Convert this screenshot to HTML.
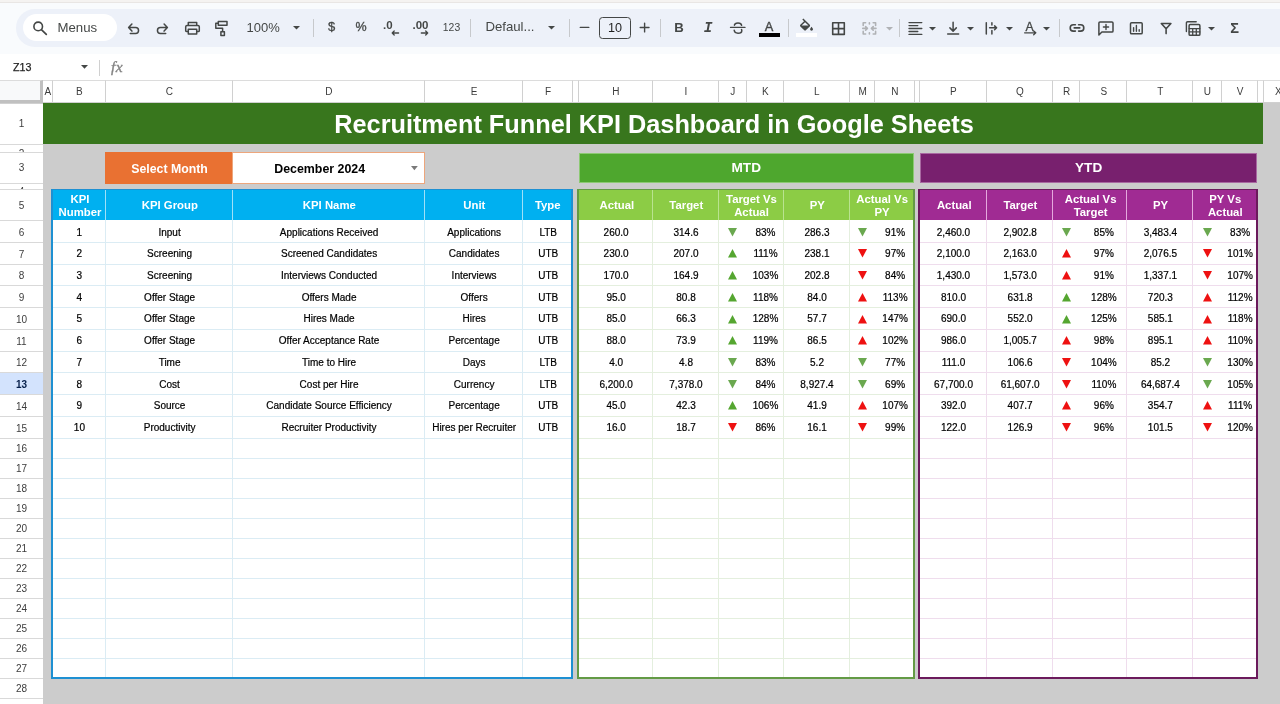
<!DOCTYPE html>
<html lang="en">
<head>
<meta charset="utf-8">
<title>Recruitment Funnel KPI Dashboard in Google Sheets</title>
<style>
html,body{margin:0;padding:0;}
body{will-change:transform;width:1280px;height:704px;overflow:hidden;position:relative;background:#fff;font-family:"Liberation Sans",Arial,sans-serif;color:#1f1f1f;}
div{position:absolute;box-sizing:border-box;}
svg{position:absolute;overflow:visible;}
.c{display:flex;align-items:center;justify-content:center;text-align:center;white-space:nowrap;}
.chrome{left:0;top:0;width:1280px;height:54px;background:#f9fbfd;}
.topline{left:0;top:0;width:1280px;height:3px;background:#f5f3f1;border-bottom:1px solid #e9e6e4;}
.toolbar{left:16px;top:9px;width:1290px;height:37.5px;border-radius:18.75px;background:#edf1f9;}
.search{left:23px;top:13.5px;width:94px;height:27.5px;border-radius:14px;background:#fff;}
.tb{font-size:14px;color:#444746;}
.fbar{left:0;top:54px;width:1280px;height:26.5px;background:#fff;}
.sheet{left:0;top:80.5px;width:1280px;height:624px;background:#ccc;}
.colhdr{background:#fff;font-size:10px;color:#3c3c3c;padding-left:1px;border-right:1px solid #d0d0d0;border-top:1px solid #dcdcdc;border-bottom:1px solid #d0d0d0;}
.rowhdr{background:#fff;left:0;width:43px;font-size:10px;color:#3c3c3c;padding-top:1.6px;border-bottom:1px solid #d9d9d9;}
.rowsel{background:#d3e3fd;color:#041e49;font-weight:bold;}
.corner{left:0;top:80px;width:43px;height:23px;background:#f8f9fa;border-right:3.5px solid #c0c0c0;border-bottom:3.2px solid #c0c0c0;border-top:1px solid #dcdcdc;}
.title{background:#38761d;color:#fff;font-weight:bold;font-size:25.3px;}
.orange{background:#e97132;color:#fff;font-weight:bold;font-size:12.3px;}
.dd{background:#fff;border:1px solid #eda67c;color:#000;font-weight:bold;font-size:12.4px;}
.mtd{background:#4ea72e;color:#fff;font-weight:bold;font-size:13.6px;border:1px solid #8cc973;}
.ytd{background:#78206e;color:#fff;font-weight:bold;font-size:13.6px;border:1px solid #a969a2;}
.hb{background:#00b0f0;color:#fff;font-weight:bold;font-size:11.35px;line-height:12.75px;white-space:normal;}
.hg{background:#8ccc45;color:#fff;font-weight:bold;font-size:11.35px;line-height:12.75px;white-space:normal;}
.hp{background:#a02b93;color:#fff;font-weight:bold;font-size:11.35px;line-height:12.75px;white-space:normal;}
.tblb{background:#fff;border:2px solid #1e90d2;}
.tblg{background:#fff;border:2px solid #639a45;}
.tblp{background:#fff;border:2px solid #6b1a5c;}
.d{font-size:10px;color:#000;-webkit-text-stroke:0.2px #000;}
.vl{width:1px;}
.hl{height:1px;}
</style>
</head>
<body>
<div class="chrome"></div>
<div class="topline"></div>
<div class="toolbar"></div>
<div class="search"></div>
<svg style="left:32px;top:20px" width="16" height="16" viewBox="32 20 16 16"><circle cx="38.2" cy="26.4" r="4.3" fill="none" stroke="#444746" stroke-width="1.6"/><path d="M41.4 29.7 L46.3 34.4" fill="none" stroke="#444746" stroke-width="1.7" stroke-linecap="round" stroke-linejoin="round" /></svg>
<div class="c tb" style="left:57.5px;top:18px;width:41px;height:18px;font-size:13.2px;justify-content:flex-start;">Menus</div>
<svg style="left:126px;top:22px" width="15" height="14" viewBox="126 22 15 14"><path d="M131.9 24.1 L128.6 27.6 L131.9 31.1 M129 27.6 H135.6 A2.95 2.95 0 0 1 135.6 33.5 H130.3" fill="none" stroke="#444746" stroke-width="1.5" stroke-linecap="round" stroke-linejoin="round" /></svg>
<svg style="left:155px;top:22px" width="15" height="14" viewBox="155 22 15 14"><path d="M164.1 24.1 L167.4 27.6 L164.1 31.1 M167 27.6 H160.4 A2.95 2.95 0 0 0 160.4 33.5 H165.7" fill="none" stroke="#444746" stroke-width="1.5" stroke-linecap="round" stroke-linejoin="round" /></svg>
<svg style="left:184px;top:21px" width="17" height="15" viewBox="184 21 17 15"><path d="M188.3 25.6 V22.6 H196.7 V25.6 M188.3 31.6 H186.6 A0.9 0.9 0 0 1 185.7 30.7 V26.8 A1.3 1.3 0 0 1 187 25.6 H198 A1.3 1.3 0 0 1 199.3 26.8 V30.7 A0.9 0.9 0 0 1 198.4 31.6 H196.7 M188.3 29.3 H196.7 V34 H188.3 Z" fill="none" stroke="#444746" stroke-width="1.5" stroke-linecap="round" stroke-linejoin="round" /></svg>
<svg style="left:214px;top:20px" width="15" height="17" viewBox="214 20 15 17"><path d="M218.3 21.6 H227 V25.2 H218.3 Z M218.3 23.3 H215.8 V28.2 H222.6 V31.6 M220.9 31.8 H224.4 V35.6 H220.9 Z" fill="none" stroke="#444746" stroke-width="1.5" stroke-linecap="round" stroke-linejoin="round" /></svg>
<div class="c tb" style="left:246.5px;top:18px;width:36px;height:18px;font-size:13px;justify-content:flex-start;">100%</div>
<svg style="left:293px;top:26.2px" width="7" height="3.6" viewBox="293 26.2 7 3.6"><path d="M293 26.2 h7 l-3.5 3.6 z" fill="#444746"/></svg>
<div style="left:313px;top:18.5px;width:1px;height:18.5px;background:#c7c9cc;"></div>
<div class="c tb" style="left:322px;top:17.5px;width:19px;height:18px;font-size:13px;-webkit-text-stroke:0.3px #444746;">$</div>
<div class="c tb" style="left:351px;top:17.5px;width:20px;height:18px;font-size:12.5px;-webkit-text-stroke:0.3px #444746;">%</div>
<div class="c tb" style="left:383px;top:15.5px;width:10px;height:18px;font-size:11.5px;justify-content:flex-start;font-weight:bold;">.0</div>
<svg style="left:390px;top:30px" width="10" height="6" viewBox="390 30 10 6"><path d="M398.6 33 H392.2 M394.2 31 L392.2 33 L394.2 35" fill="none" stroke="#444746" stroke-width="1.3" stroke-linecap="round" stroke-linejoin="round" /></svg>
<div class="c tb" style="left:412.5px;top:15.5px;width:18px;height:18px;font-size:11.5px;justify-content:flex-start;font-weight:bold;">.00</div>
<svg style="left:420px;top:30px" width="10" height="6" viewBox="420 30 10 6"><path d="M421.3 33 H427.7 M425.7 31 L427.7 33 L425.7 35" fill="none" stroke="#444746" stroke-width="1.3" stroke-linecap="round" stroke-linejoin="round" /></svg>
<div class="c tb" style="left:441px;top:18px;width:21px;height:18px;font-size:10.4px;">123</div>
<div style="left:470px;top:18.5px;width:1px;height:18.5px;background:#c7c9cc;"></div>
<div class="c tb" style="left:485.4px;top:17.5px;width:52px;height:18px;font-size:13.2px;justify-content:flex-start;">Defaul...</div>
<svg style="left:548px;top:26.2px" width="7" height="3.6" viewBox="548 26.2 7 3.6"><path d="M548 26.2 h7 l-3.5 3.6 z" fill="#444746"/></svg>
<div style="left:569px;top:18.5px;width:1px;height:18.5px;background:#c7c9cc;"></div>
<svg style="left:578px;top:24px" width="13" height="7" viewBox="578 24 13 7"><path d="M580.3 27.4 H588.8" fill="none" stroke="#444746" stroke-width="1.4" stroke-linecap="round" stroke-linejoin="round" /></svg>
<div class="c tb" style="left:599px;top:16.5px;width:32px;height:22.3px;border:1px solid #444746;border-radius:3.5px;font-size:12.6px;color:#1f1f1f;">10</div>
<svg style="left:638px;top:21px" width="13" height="13" viewBox="638 21 13 13"><path d="M640.2 27.5 H649 M644.6 23.1 V31.9" fill="none" stroke="#444746" stroke-width="1.4" stroke-linecap="round" stroke-linejoin="round" /></svg>
<div style="left:659.8px;top:18.5px;width:1px;height:18.5px;background:#c7c9cc;"></div>
<div class="c tb" style="left:670px;top:18px;width:18px;height:19px;font-size:13.2px;font-weight:bold;">B</div>
<div class="c tb" style="left:699px;top:18px;width:18px;height:19px;font-size:14.5px;font-family:'Liberation Mono',monospace;font-weight:bold;font-style:italic;">I</div>
<svg style="left:728px;top:20px" width="19" height="16" viewBox="728 20 19 16"><path d="M730.5 27.4 H745" fill="none" stroke="#444746" stroke-width="1.3" stroke-linecap="round" stroke-linejoin="round" /><path d="M741.6 25.3 C741.4 23.7 740.1 22.9 738 22.9 C735.9 22.9 734.6 23.7 734.4 25.2 M734.2 30.3 C734.4 32.3 735.7 33.2 738 33.2 C740.3 33.2 741.8 32.3 741.8 30.7 C741.8 30.2 741.7 29.8 741.5 29.5" fill="none" stroke="#444746" stroke-width="1.5" stroke-linecap="round" stroke-linejoin="round" /></svg>
<div class="c tb" style="left:759px;top:18.2px;width:20px;height:17px;font-size:12.8px;-webkit-text-stroke:0.35px #444746;">A</div>
<div style="left:758.5px;top:33.3px;width:21px;height:3.4px;background:#000;"></div>
<div style="left:788px;top:18.5px;width:1px;height:18.5px;background:#c7c9cc;"></div>
<svg style="left:795px;top:17px" width="24" height="16" viewBox="795 17 24 16"><g transform="translate(797.83 18.4) scale(0.722)"><path fill="#444746" d="M16.56 8.94L7.62 0 6.21 1.41l2.38 2.38-5.15 5.15c-.59.59-.59 1.54 0 2.12l5.5 5.5c.29.29.68.44 1.06.44s.77-.15 1.06-.44l5.5-5.5c.59-.58.59-1.53 0-2.12zM5.21 10L10 5.21 14.79 10H5.21zM19 11.5s-2 2.17-2 3.5c0 1.1.9 2 2 2s2-.9 2-2c0-1.33-2-3.5-2-3.5z"/></g></svg>
<div style="left:796.3px;top:33.3px;width:20.7px;height:3.4px;background:#fff;"></div>
<svg style="left:830px;top:20px" width="17" height="17" viewBox="830 20 17 17"><path d="M832.7 22.8 H844.3 V34.4 H832.7 Z M838.5 22.8 V34.4 M832.7 28.6 H844.3" fill="none" stroke="#444746" stroke-width="1.6" stroke-linecap="round" stroke-linejoin="round" /></svg>
<svg style="left:861px;top:20px" width="17" height="16" viewBox="861 20 17 16"><path d="M865.6 22.8 H863.2 V25.4 M863.2 31.4 V34 H865.6 M873.2 22.8 H875.6 V25.4 M875.6 31.4 V34 H873.2 M869.4 22.8 V24 M869.4 32.8 V34" fill="none" stroke="#b0b2b5" stroke-width="1.6" stroke-linecap="round" stroke-linejoin="round" /><path d="M862.8 28.4 H867.2 M865.6 26.6 L867.4 28.4 L865.6 30.2 M876 28.4 H871.6 M873.2 26.6 L871.4 28.4 L873.2 30.2" fill="none" stroke="#b0b2b5" stroke-width="1.6" stroke-linecap="round" stroke-linejoin="round" /></svg>
<svg style="left:885.5px;top:26.5px" width="7" height="3.6" viewBox="885.5 26.5 7 3.6"><path d="M885.5 26.5 h7 l-3.5 3.6 z" fill="#b0b2b5"/></svg>
<div style="left:899px;top:18.5px;width:1px;height:18.5px;background:#c7c9cc;"></div>
<svg style="left:907px;top:20px" width="17" height="16" viewBox="907 20 17 16"><path d="M909 22.6 H921.8 M909 25.55 H917.8 M909 28.5 H921.8 M909 31.45 H917.8 M909 34.4 H921.8" fill="none" stroke="#444746" stroke-width="1.35" stroke-linecap="round" stroke-linejoin="round" stroke-linecap="butt"/></svg>
<svg style="left:929px;top:26.5px" width="7" height="3.6" viewBox="929 26.5 7 3.6"><path d="M929 26.5 h7 l-3.5 3.6 z" fill="#444746"/></svg>
<svg style="left:946px;top:20px" width="14" height="16" viewBox="946 20 14 16"><path d="M953.1 22.3 V31 M949.9 27.9 L953.1 31.1 L956.3 27.9" fill="none" stroke="#444746" stroke-width="1.5" stroke-linecap="round" stroke-linejoin="round" /><path d="M947.7 34.1 H958.6" fill="none" stroke="#444746" stroke-width="1.5" stroke-linecap="round" stroke-linejoin="round" /></svg>
<svg style="left:967px;top:26.5px" width="7" height="3.6" viewBox="967 26.5 7 3.6"><path d="M967 26.5 h7 l-3.5 3.6 z" fill="#444746"/></svg>
<svg style="left:984px;top:20px" width="15" height="16" viewBox="984 20 15 16"><path d="M986.3 22.8 V34" fill="none" stroke="#444746" stroke-width="1.5" stroke-linecap="round" stroke-linejoin="round" /><path d="M991.9 22.8 V25 M991.9 30.6 V34" fill="none" stroke="#444746" stroke-width="1.5" stroke-linecap="round" stroke-linejoin="round" /><path d="M989.6 27.8 H996.4 M994.6 25.9 L996.6 27.8 L994.6 29.7" fill="none" stroke="#444746" stroke-width="1.5" stroke-linecap="round" stroke-linejoin="round" /></svg>
<svg style="left:1005.6px;top:26.5px" width="7" height="3.6" viewBox="1005.6 26.5 7 3.6"><path d="M1005.6 26.5 h7 l-3.5 3.6 z" fill="#444746"/></svg>
<div class="c tb" style="left:1020.2px;top:18.2px;width:19px;height:17px;font-size:12.2px;-webkit-text-stroke:0.3px #444746;">A</div>
<svg style="left:1023px;top:30px" width="15" height="6" viewBox="1023 30 15 6"><path d="M1024.6 32.8 H1035.6 M1033.7 30.9 L1035.8 32.8 L1033.7 34.7" fill="none" stroke="#444746" stroke-width="1.3" stroke-linecap="round" stroke-linejoin="round" /></svg>
<svg style="left:1043px;top:26.5px" width="7" height="3.6" viewBox="1043 26.5 7 3.6"><path d="M1043 26.5 h7 l-3.5 3.6 z" fill="#444746"/></svg>
<div style="left:1058.5px;top:18.5px;width:1px;height:18.5px;background:#c7c9cc;"></div>
<svg style="left:1068px;top:22px" width="18" height="12" viewBox="1068 22 18 12"><path d="M1075.4 24.7 H1073.4 A3.2 3.2 0 0 0 1073.4 31.1 H1075.4 M1078.6 24.7 H1080.6 A3.2 3.2 0 0 1 1080.6 31.1 H1078.6 M1074.2 27.9 H1079.8" fill="none" stroke="#444746" stroke-width="1.6" stroke-linecap="round" stroke-linejoin="round" /></svg>
<svg style="left:1097px;top:20px" width="18" height="17" viewBox="1097 20 18 17"><path d="M1098.9 35 V23.1 A1.1 1.1 0 0 1 1100 22 H1111.9 A1.1 1.1 0 0 1 1113 23.1 V30.9 A1.1 1.1 0 0 1 1111.9 32 H1101.9 Z" fill="none" stroke="#444746" stroke-width="1.5" stroke-linecap="round" stroke-linejoin="round" /><path d="M1106 24.4 V29.6 M1103.4 27 H1108.6" fill="none" stroke="#444746" stroke-width="1.4" stroke-linecap="round" stroke-linejoin="round" /></svg>
<svg style="left:1128px;top:20px" width="17" height="17" viewBox="1128 20 17 17"><path d="M1131.6 22.7 H1141.1 A1.1 1.1 0 0 1 1142.2 23.8 V32.7 A1.1 1.1 0 0 1 1141.1 33.8 H1131.6 A1.1 1.1 0 0 1 1130.5 32.7 V23.8 A1.1 1.1 0 0 1 1131.6 22.7 Z" fill="none" stroke="#444746" stroke-width="1.5" stroke-linecap="round" stroke-linejoin="round" /><path d="M1133.6 27.6 V31.3 M1136.4 25.4 V31.3 M1139.2 29.6 V31.3" fill="none" stroke="#444746" stroke-width="1.4" stroke-linecap="round" stroke-linejoin="round" /></svg>
<svg style="left:1159px;top:21px" width="14" height="15" viewBox="1159 21 14 15"><path d="M1161.3 23.5 H1170.9 L1166.1 28.7 Z M1166.1 28.7 V33.6" fill="none" stroke="#444746" stroke-width="1.6" stroke-linecap="round" stroke-linejoin="round" /></svg>
<svg style="left:1184px;top:19px" width="18" height="18" viewBox="1184 19 18 18"><path d="M1186.4 31.6 V22.9 A1.2 1.2 0 0 1 1187.6 21.7 H1196.2" fill="none" stroke="#444746" stroke-width="1.4" stroke-linecap="round" stroke-linejoin="round" /><path d="M1190.2 24.6 H1198.8 A1.1 1.1 0 0 1 1199.9 25.7 V34.2 A1.1 1.1 0 0 1 1198.8 35.3 H1190.2 A1.1 1.1 0 0 1 1189.1 34.2 V25.7 A1.1 1.1 0 0 1 1190.2 24.6 Z" fill="none" stroke="#444746" stroke-width="1.5" stroke-linecap="round" stroke-linejoin="round" /><path d="M1189.2 28.6 H1199.8 M1189.2 31.9 H1199.8 M1192.7 28.6 V35.2 M1196.3 28.6 V35.2" fill="none" stroke="#444746" stroke-width="1.3" stroke-linecap="round" stroke-linejoin="round" /></svg>
<svg style="left:1207.5px;top:26.5px" width="7" height="3.6" viewBox="1207.5 26.5 7 3.6"><path d="M1207.5 26.5 h7 l-3.5 3.6 z" fill="#444746"/></svg>
<div class="c tb" style="left:1225px;top:18px;width:19px;height:20px;font-size:14.5px;font-weight:bold;">Σ</div>
<div class="fbar"></div>
<div class="c" style="left:13px;top:59px;width:20px;height:16px;font-size:10.7px;color:#1f1f1f;-webkit-text-stroke:0.25px #1f1f1f;justify-content:flex-start;">Z13</div>
<svg style="left:81px;top:65.2px" width="7" height="3.7" viewBox="0 0 7 3.7"><path d="M0 0h7L3.5 3.7z" fill="#444746"/></svg>
<div style="left:99px;top:60px;width:1px;height:16px;background:#d0d0d0;"></div>
<div class="c" style="left:109px;top:58px;width:16px;height:18px;font-family:'Liberation Serif',serif;font-style:italic;font-size:15.5px;color:#858585;-webkit-text-stroke:0.35px #858585;letter-spacing:0.3px;">fx</div>
<div class="sheet"></div>
<div class="colhdr c" style="left:43px;top:80px;width:9.6px;height:22.5px;">A</div>
<div class="colhdr c" style="left:52.6px;top:80px;width:53.3px;height:22.5px;">B</div>
<div class="colhdr c" style="left:105.9px;top:80px;width:127.1px;height:22.5px;">C</div>
<div class="colhdr c" style="left:233px;top:80px;width:191.85px;height:22.5px;">D</div>
<div class="colhdr c" style="left:424.85px;top:80px;width:98.25px;height:22.5px;">E</div>
<div class="colhdr c" style="left:523.1px;top:80px;width:50px;height:22.5px;">F</div>
<div class="colhdr c" style="left:573.1px;top:80px;width:5.75px;height:22.5px;"></div>
<div class="colhdr c" style="left:578.85px;top:80px;width:74.25px;height:22.5px;">H</div>
<div class="colhdr c" style="left:653.1px;top:80px;width:65.5px;height:22.5px;">I</div>
<div class="colhdr c" style="left:718.6px;top:80px;width:28.5px;height:22.5px;">J</div>
<div class="colhdr c" style="left:747.1px;top:80px;width:36.5px;height:22.5px;">K</div>
<div class="colhdr c" style="left:783.6px;top:80px;width:66.5px;height:22.5px;">L</div>
<div class="colhdr c" style="left:850.1px;top:80px;width:25px;height:22.5px;">M</div>
<div class="colhdr c" style="left:875.1px;top:80px;width:39.75px;height:22.5px;">N</div>
<div class="colhdr c" style="left:914.85px;top:80px;width:5px;height:22.5px;"></div>
<div class="colhdr c" style="left:919.85px;top:80px;width:67px;height:22.5px;">P</div>
<div class="colhdr c" style="left:986.85px;top:80px;width:66.25px;height:22.5px;">Q</div>
<div class="colhdr c" style="left:1053.1px;top:80px;width:27px;height:22.5px;">R</div>
<div class="colhdr c" style="left:1080.1px;top:80px;width:47.25px;height:22.5px;">S</div>
<div class="colhdr c" style="left:1127.35px;top:80px;width:65.75px;height:22.5px;">T</div>
<div class="colhdr c" style="left:1193.1px;top:80px;width:28.75px;height:22.5px;">U</div>
<div class="colhdr c" style="left:1221.85px;top:80px;width:36.25px;height:22.5px;">V</div>
<div class="colhdr c" style="left:1258.1px;top:80px;width:6px;height:22.5px;"></div>
<div class="colhdr c" style="left:1264.1px;top:80px;width:28.5px;height:22.5px;">X</div>
<div class="corner"></div>
<div class="rowhdr c" style="left:0px;top:103.5px;width:43px;height:41px;padding-top:0;">1</div>
<div class="rowhdr c" style="left:0px;top:144.5px;width:43px;height:8.25px;overflow:hidden;align-items:flex-start;line-height:10px;padding-top:4px;">2</div>
<div class="rowhdr c" style="left:0px;top:152.75px;width:43px;height:31.25px;padding-top:0;">3</div>
<div class="rowhdr c" style="left:0px;top:184px;width:43px;height:6px;overflow:hidden;align-items:flex-start;line-height:10px;padding-top:3px;">4</div>
<div class="rowhdr c" style="left:0px;top:190px;width:43px;height:31.25px;padding-top:0;">5</div>
<div class="rowhdr c" style="left:0px;top:221.25px;width:43px;height:21.72px;">6</div>
<div class="rowhdr c" style="left:0px;top:242.97px;width:43px;height:21.72px;">7</div>
<div class="rowhdr c" style="left:0px;top:264.69px;width:43px;height:21.72px;">8</div>
<div class="rowhdr c" style="left:0px;top:286.41px;width:43px;height:21.72px;">9</div>
<div class="rowhdr c" style="left:0px;top:308.13px;width:43px;height:21.72px;">10</div>
<div class="rowhdr c" style="left:0px;top:329.85px;width:43px;height:21.72px;">11</div>
<div class="rowhdr c" style="left:0px;top:351.57px;width:43px;height:21.72px;">12</div>
<div class="rowhdr c rowsel" style="left:0px;top:373.29px;width:43px;height:21.72px;">13</div>
<div class="rowhdr c" style="left:0px;top:395.01px;width:43px;height:21.72px;">14</div>
<div class="rowhdr c" style="left:0px;top:416.73px;width:43px;height:22.27px;">15</div>
<div class="rowhdr c" style="left:0px;top:439px;width:43px;height:20px;padding-top:0;padding-bottom:0.6px;">16</div>
<div class="rowhdr c" style="left:0px;top:459px;width:43px;height:20px;padding-top:0;padding-bottom:0.6px;">17</div>
<div class="rowhdr c" style="left:0px;top:479px;width:43px;height:20px;padding-top:0;padding-bottom:0.6px;">18</div>
<div class="rowhdr c" style="left:0px;top:499px;width:43px;height:20px;padding-top:0;padding-bottom:0.6px;">19</div>
<div class="rowhdr c" style="left:0px;top:519px;width:43px;height:20px;padding-top:0;padding-bottom:0.6px;">20</div>
<div class="rowhdr c" style="left:0px;top:539px;width:43px;height:20px;padding-top:0;padding-bottom:0.6px;">21</div>
<div class="rowhdr c" style="left:0px;top:559px;width:43px;height:20px;padding-top:0;padding-bottom:0.6px;">22</div>
<div class="rowhdr c" style="left:0px;top:579px;width:43px;height:20px;padding-top:0;padding-bottom:0.6px;">23</div>
<div class="rowhdr c" style="left:0px;top:599px;width:43px;height:20px;padding-top:0;padding-bottom:0.6px;">24</div>
<div class="rowhdr c" style="left:0px;top:619px;width:43px;height:20px;padding-top:0;padding-bottom:0.6px;">25</div>
<div class="rowhdr c" style="left:0px;top:639px;width:43px;height:20px;padding-top:0;padding-bottom:0.6px;">26</div>
<div class="rowhdr c" style="left:0px;top:659px;width:43px;height:20px;padding-top:0;padding-bottom:0.6px;">27</div>
<div class="rowhdr c" style="left:0px;top:679px;width:43px;height:20px;padding-top:0;padding-bottom:0.6px;">28</div>
<div class="rowhdr c" style="left:0px;top:699px;width:43px;height:20px;padding-top:0;padding-bottom:0.6px;">29</div>
<div style="left:0;top:102.5px;width:43px;height:1px;background:#d0d0d0;"></div>
<div class="title c" style="left:43px;top:103px;width:1220px;height:41px;padding-top:2.5px;padding-left:2px;">Recruitment Funnel KPI Dashboard in Google Sheets</div>
<div class="orange c" style="left:105.3px;top:152.25px;width:127.1px;height:31.25px;padding-top:2.5px;padding-left:1.5px;">Select Month</div>
<div class="dd c" style="left:232.4px;top:152.25px;width:192.6px;height:31.25px;padding-right:18px;padding-top:2.5px;">December 2024</div>
<svg style="left:411px;top:165.8px" width="6.8" height="4.2" viewBox="0 0 6.8 4.2"><path d="M0 0h6.8L3.4 4.2z" fill="#7a7a7a"/></svg>
<div class="mtd c" style="left:579px;top:153px;width:334.5px;height:29.75px;">MTD</div>
<div class="ytd c" style="left:920px;top:153px;width:337.25px;height:29.75px;">YTD</div>
<div class="tblb" style="left:50.75px;top:189px;width:522.25px;height:490px;"></div>
<div class="hb c" style="left:52.75px;top:190px;width:52.55px;height:30.4px;padding-top:1px;padding-left:2px;">KPI<br>Number</div>
<div class="hb c" style="left:105.3px;top:190px;width:127.1px;height:30.4px;padding-top:1px;padding-left:2px;">KPI Group</div>
<div class="hb c" style="left:232.4px;top:190px;width:191.85px;height:30.4px;padding-top:1px;padding-left:2px;">KPI Name</div>
<div class="hb c" style="left:424.25px;top:190px;width:98.25px;height:30.4px;padding-top:1px;padding-left:2px;">Unit</div>
<div class="hb c" style="left:522.5px;top:190px;width:48.5px;height:30.4px;padding-top:1px;padding-left:2px;">Type</div>
<div class="vl" style="left:104.8px;top:190px;height:30.4px;background:#9fe0f8;"></div>
<div class="vl" style="left:231.9px;top:190px;height:30.4px;background:#9fe0f8;"></div>
<div class="vl" style="left:423.75px;top:190px;height:30.4px;background:#9fe0f8;"></div>
<div class="vl" style="left:522px;top:190px;height:30.4px;background:#9fe0f8;"></div>
<div class="vl" style="left:104.8px;top:220.4px;height:456.6px;background:#dbecf4;"></div>
<div class="vl" style="left:231.9px;top:220.4px;height:456.6px;background:#dbecf4;"></div>
<div class="vl" style="left:423.75px;top:220.4px;height:456.6px;background:#dbecf4;"></div>
<div class="vl" style="left:522px;top:220.4px;height:456.6px;background:#dbecf4;"></div>
<div class="hl" style="left:52.75px;top:241.97px;width:518.25px;background:#dbecf4;"></div>
<div class="hl" style="left:52.75px;top:263.69px;width:518.25px;background:#dbecf4;"></div>
<div class="hl" style="left:52.75px;top:285.41px;width:518.25px;background:#dbecf4;"></div>
<div class="hl" style="left:52.75px;top:307.13px;width:518.25px;background:#dbecf4;"></div>
<div class="hl" style="left:52.75px;top:328.85px;width:518.25px;background:#dbecf4;"></div>
<div class="hl" style="left:52.75px;top:350.57px;width:518.25px;background:#dbecf4;"></div>
<div class="hl" style="left:52.75px;top:372.29px;width:518.25px;background:#dbecf4;"></div>
<div class="hl" style="left:52.75px;top:394.01px;width:518.25px;background:#dbecf4;"></div>
<div class="hl" style="left:52.75px;top:415.73px;width:518.25px;background:#dbecf4;"></div>
<div class="hl" style="left:52.75px;top:438px;width:518.25px;background:#dbecf4;"></div>
<div class="hl" style="left:52.75px;top:458px;width:518.25px;background:#dbecf4;"></div>
<div class="hl" style="left:52.75px;top:478px;width:518.25px;background:#dbecf4;"></div>
<div class="hl" style="left:52.75px;top:498px;width:518.25px;background:#dbecf4;"></div>
<div class="hl" style="left:52.75px;top:518px;width:518.25px;background:#dbecf4;"></div>
<div class="hl" style="left:52.75px;top:538px;width:518.25px;background:#dbecf4;"></div>
<div class="hl" style="left:52.75px;top:558px;width:518.25px;background:#dbecf4;"></div>
<div class="hl" style="left:52.75px;top:578px;width:518.25px;background:#dbecf4;"></div>
<div class="hl" style="left:52.75px;top:598px;width:518.25px;background:#dbecf4;"></div>
<div class="hl" style="left:52.75px;top:618px;width:518.25px;background:#dbecf4;"></div>
<div class="hl" style="left:52.75px;top:638px;width:518.25px;background:#dbecf4;"></div>
<div class="hl" style="left:52.75px;top:658px;width:518.25px;background:#dbecf4;"></div>
<div class="tblg" style="left:577.25px;top:189px;width:337.5px;height:490px;"></div>
<div class="hg c" style="left:579.25px;top:190px;width:73.25px;height:30.4px;padding-top:1px;padding-left:2px;">Actual</div>
<div class="hg c" style="left:652.5px;top:190px;width:65.5px;height:30.4px;padding-top:1px;padding-left:2px;">Target</div>
<div class="hg c" style="left:718px;top:190px;width:65px;height:30.4px;padding-top:1px;padding-left:2px;">Target Vs<br>Actual</div>
<div class="hg c" style="left:783px;top:190px;width:66.5px;height:30.4px;padding-top:1px;padding-left:2px;">PY</div>
<div class="hg c" style="left:849.5px;top:190px;width:63.25px;height:30.4px;padding-top:1px;padding-left:2px;">Actual Vs<br>PY</div>
<div class="vl" style="left:652px;top:190px;height:30.4px;background:#b9e38f;"></div>
<div class="vl" style="left:717.5px;top:190px;height:30.4px;background:#b9e38f;"></div>
<div class="vl" style="left:782.5px;top:190px;height:30.4px;background:#b9e38f;"></div>
<div class="vl" style="left:849px;top:190px;height:30.4px;background:#b9e38f;"></div>
<div class="vl" style="left:652px;top:220.4px;height:456.6px;background:#e4efde;"></div>
<div class="vl" style="left:717.5px;top:220.4px;height:456.6px;background:#e4efde;"></div>
<div class="vl" style="left:782.5px;top:220.4px;height:456.6px;background:#e4efde;"></div>
<div class="vl" style="left:849px;top:220.4px;height:456.6px;background:#e4efde;"></div>
<div class="hl" style="left:579.25px;top:241.97px;width:333.5px;background:#e4efde;"></div>
<div class="hl" style="left:579.25px;top:263.69px;width:333.5px;background:#e4efde;"></div>
<div class="hl" style="left:579.25px;top:285.41px;width:333.5px;background:#e4efde;"></div>
<div class="hl" style="left:579.25px;top:307.13px;width:333.5px;background:#e4efde;"></div>
<div class="hl" style="left:579.25px;top:328.85px;width:333.5px;background:#e4efde;"></div>
<div class="hl" style="left:579.25px;top:350.57px;width:333.5px;background:#e4efde;"></div>
<div class="hl" style="left:579.25px;top:372.29px;width:333.5px;background:#e4efde;"></div>
<div class="hl" style="left:579.25px;top:394.01px;width:333.5px;background:#e4efde;"></div>
<div class="hl" style="left:579.25px;top:415.73px;width:333.5px;background:#e4efde;"></div>
<div class="hl" style="left:579.25px;top:438px;width:333.5px;background:#e4efde;"></div>
<div class="hl" style="left:579.25px;top:458px;width:333.5px;background:#e4efde;"></div>
<div class="hl" style="left:579.25px;top:478px;width:333.5px;background:#e4efde;"></div>
<div class="hl" style="left:579.25px;top:498px;width:333.5px;background:#e4efde;"></div>
<div class="hl" style="left:579.25px;top:518px;width:333.5px;background:#e4efde;"></div>
<div class="hl" style="left:579.25px;top:538px;width:333.5px;background:#e4efde;"></div>
<div class="hl" style="left:579.25px;top:558px;width:333.5px;background:#e4efde;"></div>
<div class="hl" style="left:579.25px;top:578px;width:333.5px;background:#e4efde;"></div>
<div class="hl" style="left:579.25px;top:598px;width:333.5px;background:#e4efde;"></div>
<div class="hl" style="left:579.25px;top:618px;width:333.5px;background:#e4efde;"></div>
<div class="hl" style="left:579.25px;top:638px;width:333.5px;background:#e4efde;"></div>
<div class="hl" style="left:579.25px;top:658px;width:333.5px;background:#e4efde;"></div>
<div class="tblp" style="left:918.25px;top:189px;width:339.75px;height:490px;"></div>
<div class="hp c" style="left:920.25px;top:190px;width:66px;height:30.4px;padding-top:1px;padding-left:2px;">Actual</div>
<div class="hp c" style="left:986.25px;top:190px;width:66.25px;height:30.4px;padding-top:1px;padding-left:2px;">Target</div>
<div class="hp c" style="left:1052.5px;top:190px;width:74.25px;height:30.4px;padding-top:1px;padding-left:2px;">Actual Vs<br>Target</div>
<div class="hp c" style="left:1126.75px;top:190px;width:65.75px;height:30.4px;padding-top:1px;padding-left:2px;">PY</div>
<div class="hp c" style="left:1192.5px;top:190px;width:63.5px;height:30.4px;padding-top:1px;padding-left:2px;">PY Vs<br>Actual</div>
<div class="vl" style="left:985.75px;top:190px;height:30.4px;background:#e4a9dd;"></div>
<div class="vl" style="left:1052px;top:190px;height:30.4px;background:#e4a9dd;"></div>
<div class="vl" style="left:1126.25px;top:190px;height:30.4px;background:#e4a9dd;"></div>
<div class="vl" style="left:1192px;top:190px;height:30.4px;background:#e4a9dd;"></div>
<div class="vl" style="left:985.75px;top:220.4px;height:456.6px;background:#efdded;"></div>
<div class="vl" style="left:1052px;top:220.4px;height:456.6px;background:#efdded;"></div>
<div class="vl" style="left:1126.25px;top:220.4px;height:456.6px;background:#efdded;"></div>
<div class="vl" style="left:1192px;top:220.4px;height:456.6px;background:#efdded;"></div>
<div class="hl" style="left:920.25px;top:241.97px;width:335.75px;background:#efdded;"></div>
<div class="hl" style="left:920.25px;top:263.69px;width:335.75px;background:#efdded;"></div>
<div class="hl" style="left:920.25px;top:285.41px;width:335.75px;background:#efdded;"></div>
<div class="hl" style="left:920.25px;top:307.13px;width:335.75px;background:#efdded;"></div>
<div class="hl" style="left:920.25px;top:328.85px;width:335.75px;background:#efdded;"></div>
<div class="hl" style="left:920.25px;top:350.57px;width:335.75px;background:#efdded;"></div>
<div class="hl" style="left:920.25px;top:372.29px;width:335.75px;background:#efdded;"></div>
<div class="hl" style="left:920.25px;top:394.01px;width:335.75px;background:#efdded;"></div>
<div class="hl" style="left:920.25px;top:415.73px;width:335.75px;background:#efdded;"></div>
<div class="hl" style="left:920.25px;top:438px;width:335.75px;background:#efdded;"></div>
<div class="hl" style="left:920.25px;top:458px;width:335.75px;background:#efdded;"></div>
<div class="hl" style="left:920.25px;top:478px;width:335.75px;background:#efdded;"></div>
<div class="hl" style="left:920.25px;top:498px;width:335.75px;background:#efdded;"></div>
<div class="hl" style="left:920.25px;top:518px;width:335.75px;background:#efdded;"></div>
<div class="hl" style="left:920.25px;top:538px;width:335.75px;background:#efdded;"></div>
<div class="hl" style="left:920.25px;top:558px;width:335.75px;background:#efdded;"></div>
<div class="hl" style="left:920.25px;top:578px;width:335.75px;background:#efdded;"></div>
<div class="hl" style="left:920.25px;top:598px;width:335.75px;background:#efdded;"></div>
<div class="hl" style="left:920.25px;top:618px;width:335.75px;background:#efdded;"></div>
<div class="hl" style="left:920.25px;top:638px;width:335.75px;background:#efdded;"></div>
<div class="hl" style="left:920.25px;top:658px;width:335.75px;background:#efdded;"></div>
<div class="d c" style="left:52px;top:220.75px;width:53.3px;height:21.72px;padding-top:1px;padding-left:1.5px;">1</div>
<div class="d c" style="left:105.3px;top:220.75px;width:127.1px;height:21.72px;padding-top:1px;padding-left:1.5px;">Input</div>
<div class="d c" style="left:232.4px;top:220.75px;width:191.85px;height:21.72px;padding-top:1px;padding-left:1.5px;">Applications Received</div>
<div class="d c" style="left:424.25px;top:220.75px;width:98.25px;height:21.72px;padding-top:1px;padding-left:1.5px;">Applications</div>
<div class="d c" style="left:522.5px;top:220.75px;width:50px;height:21.72px;padding-top:1px;padding-left:1.5px;">LTB</div>
<div class="d c" style="left:578.25px;top:220.75px;width:74.25px;height:21.72px;padding-top:1px;padding-left:1.5px;">260.0</div>
<div class="d c" style="left:652.5px;top:220.75px;width:65.5px;height:21.72px;padding-top:1px;padding-left:1.5px;">314.6</div>
<svg style="left:728.15px;top:227.71px" width="9.0" height="8.6" viewBox="0 0 9.0 8.6"><path d="M0 0 L9.0 0 L4.5 8.6 Z" fill="#6aa84f"/></svg>
<div class="d c" style="left:746.5px;top:220.75px;width:36.5px;height:21.72px;padding-top:1px;padding-left:1.5px;">83%</div>
<div class="d c" style="left:783px;top:220.75px;width:66.5px;height:21.72px;padding-top:1px;padding-left:1.5px;">286.3</div>
<svg style="left:857.9px;top:227.71px" width="9.0" height="8.6" viewBox="0 0 9.0 8.6"><path d="M0 0 L9.0 0 L4.5 8.6 Z" fill="#6aa84f"/></svg>
<div class="d c" style="left:874.5px;top:220.75px;width:39.75px;height:21.72px;padding-top:1px;padding-left:1.5px;">91%</div>
<div class="d c" style="left:919.25px;top:220.75px;width:67px;height:21.72px;padding-top:1px;padding-left:1.5px;">2,460.0</div>
<div class="d c" style="left:986.25px;top:220.75px;width:66.25px;height:21.72px;padding-top:1px;padding-left:1.5px;">2,902.8</div>
<svg style="left:1061.9px;top:227.71px" width="9.0" height="8.6" viewBox="0 0 9.0 8.6"><path d="M0 0 L9.0 0 L4.5 8.6 Z" fill="#6aa84f"/></svg>
<div class="d c" style="left:1079.5px;top:220.75px;width:47.25px;height:21.72px;padding-top:1px;padding-left:1.5px;">85%</div>
<div class="d c" style="left:1126.75px;top:220.75px;width:65.75px;height:21.72px;padding-top:1px;padding-left:1.5px;">3,483.4</div>
<svg style="left:1202.78px;top:227.71px" width="9.0" height="8.6" viewBox="0 0 9.0 8.6"><path d="M0 0 L9.0 0 L4.5 8.6 Z" fill="#6aa84f"/></svg>
<div class="d c" style="left:1221.25px;top:220.75px;width:36.25px;height:21.72px;padding-top:1px;padding-left:1.5px;">83%</div>
<div class="d c" style="left:52px;top:242.47px;width:53.3px;height:21.72px;padding-top:1px;padding-left:1.5px;">2</div>
<div class="d c" style="left:105.3px;top:242.47px;width:127.1px;height:21.72px;padding-top:1px;padding-left:1.5px;">Screening</div>
<div class="d c" style="left:232.4px;top:242.47px;width:191.85px;height:21.72px;padding-top:1px;padding-left:1.5px;">Screened Candidates</div>
<div class="d c" style="left:424.25px;top:242.47px;width:98.25px;height:21.72px;padding-top:1px;padding-left:1.5px;">Candidates</div>
<div class="d c" style="left:522.5px;top:242.47px;width:50px;height:21.72px;padding-top:1px;padding-left:1.5px;">UTB</div>
<div class="d c" style="left:578.25px;top:242.47px;width:74.25px;height:21.72px;padding-top:1px;padding-left:1.5px;">230.0</div>
<div class="d c" style="left:652.5px;top:242.47px;width:65.5px;height:21.72px;padding-top:1px;padding-left:1.5px;">207.0</div>
<svg style="left:728.15px;top:249.43px" width="9.0" height="8.6" viewBox="0 0 9.0 8.6"><path d="M0 8.6 L9.0 8.6 L4.5 0 Z" fill="#55a630"/></svg>
<div class="d c" style="left:746.5px;top:242.47px;width:36.5px;height:21.72px;padding-top:1px;padding-left:1.5px;">111%</div>
<div class="d c" style="left:783px;top:242.47px;width:66.5px;height:21.72px;padding-top:1px;padding-left:1.5px;">238.1</div>
<svg style="left:857.9px;top:249.43px" width="9.0" height="8.6" viewBox="0 0 9.0 8.6"><path d="M0 0 L9.0 0 L4.5 8.6 Z" fill="#ee1111"/></svg>
<div class="d c" style="left:874.5px;top:242.47px;width:39.75px;height:21.72px;padding-top:1px;padding-left:1.5px;">97%</div>
<div class="d c" style="left:919.25px;top:242.47px;width:67px;height:21.72px;padding-top:1px;padding-left:1.5px;">2,100.0</div>
<div class="d c" style="left:986.25px;top:242.47px;width:66.25px;height:21.72px;padding-top:1px;padding-left:1.5px;">2,163.0</div>
<svg style="left:1061.9px;top:249.43px" width="9.0" height="8.6" viewBox="0 0 9.0 8.6"><path d="M0 8.6 L9.0 8.6 L4.5 0 Z" fill="#ee1111"/></svg>
<div class="d c" style="left:1079.5px;top:242.47px;width:47.25px;height:21.72px;padding-top:1px;padding-left:1.5px;">97%</div>
<div class="d c" style="left:1126.75px;top:242.47px;width:65.75px;height:21.72px;padding-top:1px;padding-left:1.5px;">2,076.5</div>
<svg style="left:1202.78px;top:249.43px" width="9.0" height="8.6" viewBox="0 0 9.0 8.6"><path d="M0 0 L9.0 0 L4.5 8.6 Z" fill="#ee1111"/></svg>
<div class="d c" style="left:1221.25px;top:242.47px;width:36.25px;height:21.72px;padding-top:1px;padding-left:1.5px;">101%</div>
<div class="d c" style="left:52px;top:264.19px;width:53.3px;height:21.72px;padding-top:1px;padding-left:1.5px;">3</div>
<div class="d c" style="left:105.3px;top:264.19px;width:127.1px;height:21.72px;padding-top:1px;padding-left:1.5px;">Screening</div>
<div class="d c" style="left:232.4px;top:264.19px;width:191.85px;height:21.72px;padding-top:1px;padding-left:1.5px;">Interviews Conducted</div>
<div class="d c" style="left:424.25px;top:264.19px;width:98.25px;height:21.72px;padding-top:1px;padding-left:1.5px;">Interviews</div>
<div class="d c" style="left:522.5px;top:264.19px;width:50px;height:21.72px;padding-top:1px;padding-left:1.5px;">UTB</div>
<div class="d c" style="left:578.25px;top:264.19px;width:74.25px;height:21.72px;padding-top:1px;padding-left:1.5px;">170.0</div>
<div class="d c" style="left:652.5px;top:264.19px;width:65.5px;height:21.72px;padding-top:1px;padding-left:1.5px;">164.9</div>
<svg style="left:728.15px;top:271.15px" width="9.0" height="8.6" viewBox="0 0 9.0 8.6"><path d="M0 8.6 L9.0 8.6 L4.5 0 Z" fill="#55a630"/></svg>
<div class="d c" style="left:746.5px;top:264.19px;width:36.5px;height:21.72px;padding-top:1px;padding-left:1.5px;">103%</div>
<div class="d c" style="left:783px;top:264.19px;width:66.5px;height:21.72px;padding-top:1px;padding-left:1.5px;">202.8</div>
<svg style="left:857.9px;top:271.15px" width="9.0" height="8.6" viewBox="0 0 9.0 8.6"><path d="M0 0 L9.0 0 L4.5 8.6 Z" fill="#ee1111"/></svg>
<div class="d c" style="left:874.5px;top:264.19px;width:39.75px;height:21.72px;padding-top:1px;padding-left:1.5px;">84%</div>
<div class="d c" style="left:919.25px;top:264.19px;width:67px;height:21.72px;padding-top:1px;padding-left:1.5px;">1,430.0</div>
<div class="d c" style="left:986.25px;top:264.19px;width:66.25px;height:21.72px;padding-top:1px;padding-left:1.5px;">1,573.0</div>
<svg style="left:1061.9px;top:271.15px" width="9.0" height="8.6" viewBox="0 0 9.0 8.6"><path d="M0 8.6 L9.0 8.6 L4.5 0 Z" fill="#ee1111"/></svg>
<div class="d c" style="left:1079.5px;top:264.19px;width:47.25px;height:21.72px;padding-top:1px;padding-left:1.5px;">91%</div>
<div class="d c" style="left:1126.75px;top:264.19px;width:65.75px;height:21.72px;padding-top:1px;padding-left:1.5px;">1,337.1</div>
<svg style="left:1202.78px;top:271.15px" width="9.0" height="8.6" viewBox="0 0 9.0 8.6"><path d="M0 0 L9.0 0 L4.5 8.6 Z" fill="#ee1111"/></svg>
<div class="d c" style="left:1221.25px;top:264.19px;width:36.25px;height:21.72px;padding-top:1px;padding-left:1.5px;">107%</div>
<div class="d c" style="left:52px;top:285.91px;width:53.3px;height:21.72px;padding-top:1px;padding-left:1.5px;">4</div>
<div class="d c" style="left:105.3px;top:285.91px;width:127.1px;height:21.72px;padding-top:1px;padding-left:1.5px;">Offer Stage</div>
<div class="d c" style="left:232.4px;top:285.91px;width:191.85px;height:21.72px;padding-top:1px;padding-left:1.5px;">Offers Made</div>
<div class="d c" style="left:424.25px;top:285.91px;width:98.25px;height:21.72px;padding-top:1px;padding-left:1.5px;">Offers</div>
<div class="d c" style="left:522.5px;top:285.91px;width:50px;height:21.72px;padding-top:1px;padding-left:1.5px;">UTB</div>
<div class="d c" style="left:578.25px;top:285.91px;width:74.25px;height:21.72px;padding-top:1px;padding-left:1.5px;">95.0</div>
<div class="d c" style="left:652.5px;top:285.91px;width:65.5px;height:21.72px;padding-top:1px;padding-left:1.5px;">80.8</div>
<svg style="left:728.15px;top:292.87px" width="9.0" height="8.6" viewBox="0 0 9.0 8.6"><path d="M0 8.6 L9.0 8.6 L4.5 0 Z" fill="#55a630"/></svg>
<div class="d c" style="left:746.5px;top:285.91px;width:36.5px;height:21.72px;padding-top:1px;padding-left:1.5px;">118%</div>
<div class="d c" style="left:783px;top:285.91px;width:66.5px;height:21.72px;padding-top:1px;padding-left:1.5px;">84.0</div>
<svg style="left:857.9px;top:292.87px" width="9.0" height="8.6" viewBox="0 0 9.0 8.6"><path d="M0 8.6 L9.0 8.6 L4.5 0 Z" fill="#ee1111"/></svg>
<div class="d c" style="left:874.5px;top:285.91px;width:39.75px;height:21.72px;padding-top:1px;padding-left:1.5px;">113%</div>
<div class="d c" style="left:919.25px;top:285.91px;width:67px;height:21.72px;padding-top:1px;padding-left:1.5px;">810.0</div>
<div class="d c" style="left:986.25px;top:285.91px;width:66.25px;height:21.72px;padding-top:1px;padding-left:1.5px;">631.8</div>
<svg style="left:1061.9px;top:292.87px" width="9.0" height="8.6" viewBox="0 0 9.0 8.6"><path d="M0 8.6 L9.0 8.6 L4.5 0 Z" fill="#55a630"/></svg>
<div class="d c" style="left:1079.5px;top:285.91px;width:47.25px;height:21.72px;padding-top:1px;padding-left:1.5px;">128%</div>
<div class="d c" style="left:1126.75px;top:285.91px;width:65.75px;height:21.72px;padding-top:1px;padding-left:1.5px;">720.3</div>
<svg style="left:1202.78px;top:292.87px" width="9.0" height="8.6" viewBox="0 0 9.0 8.6"><path d="M0 8.6 L9.0 8.6 L4.5 0 Z" fill="#ee1111"/></svg>
<div class="d c" style="left:1221.25px;top:285.91px;width:36.25px;height:21.72px;padding-top:1px;padding-left:1.5px;">112%</div>
<div class="d c" style="left:52px;top:307.63px;width:53.3px;height:21.72px;padding-top:1px;padding-left:1.5px;">5</div>
<div class="d c" style="left:105.3px;top:307.63px;width:127.1px;height:21.72px;padding-top:1px;padding-left:1.5px;">Offer Stage</div>
<div class="d c" style="left:232.4px;top:307.63px;width:191.85px;height:21.72px;padding-top:1px;padding-left:1.5px;">Hires Made</div>
<div class="d c" style="left:424.25px;top:307.63px;width:98.25px;height:21.72px;padding-top:1px;padding-left:1.5px;">Hires</div>
<div class="d c" style="left:522.5px;top:307.63px;width:50px;height:21.72px;padding-top:1px;padding-left:1.5px;">UTB</div>
<div class="d c" style="left:578.25px;top:307.63px;width:74.25px;height:21.72px;padding-top:1px;padding-left:1.5px;">85.0</div>
<div class="d c" style="left:652.5px;top:307.63px;width:65.5px;height:21.72px;padding-top:1px;padding-left:1.5px;">66.3</div>
<svg style="left:728.15px;top:314.59px" width="9.0" height="8.6" viewBox="0 0 9.0 8.6"><path d="M0 8.6 L9.0 8.6 L4.5 0 Z" fill="#55a630"/></svg>
<div class="d c" style="left:746.5px;top:307.63px;width:36.5px;height:21.72px;padding-top:1px;padding-left:1.5px;">128%</div>
<div class="d c" style="left:783px;top:307.63px;width:66.5px;height:21.72px;padding-top:1px;padding-left:1.5px;">57.7</div>
<svg style="left:857.9px;top:314.59px" width="9.0" height="8.6" viewBox="0 0 9.0 8.6"><path d="M0 8.6 L9.0 8.6 L4.5 0 Z" fill="#ee1111"/></svg>
<div class="d c" style="left:874.5px;top:307.63px;width:39.75px;height:21.72px;padding-top:1px;padding-left:1.5px;">147%</div>
<div class="d c" style="left:919.25px;top:307.63px;width:67px;height:21.72px;padding-top:1px;padding-left:1.5px;">690.0</div>
<div class="d c" style="left:986.25px;top:307.63px;width:66.25px;height:21.72px;padding-top:1px;padding-left:1.5px;">552.0</div>
<svg style="left:1061.9px;top:314.59px" width="9.0" height="8.6" viewBox="0 0 9.0 8.6"><path d="M0 8.6 L9.0 8.6 L4.5 0 Z" fill="#55a630"/></svg>
<div class="d c" style="left:1079.5px;top:307.63px;width:47.25px;height:21.72px;padding-top:1px;padding-left:1.5px;">125%</div>
<div class="d c" style="left:1126.75px;top:307.63px;width:65.75px;height:21.72px;padding-top:1px;padding-left:1.5px;">585.1</div>
<svg style="left:1202.78px;top:314.59px" width="9.0" height="8.6" viewBox="0 0 9.0 8.6"><path d="M0 8.6 L9.0 8.6 L4.5 0 Z" fill="#ee1111"/></svg>
<div class="d c" style="left:1221.25px;top:307.63px;width:36.25px;height:21.72px;padding-top:1px;padding-left:1.5px;">118%</div>
<div class="d c" style="left:52px;top:329.35px;width:53.3px;height:21.72px;padding-top:1px;padding-left:1.5px;">6</div>
<div class="d c" style="left:105.3px;top:329.35px;width:127.1px;height:21.72px;padding-top:1px;padding-left:1.5px;">Offer Stage</div>
<div class="d c" style="left:232.4px;top:329.35px;width:191.85px;height:21.72px;padding-top:1px;padding-left:1.5px;">Offer Acceptance Rate</div>
<div class="d c" style="left:424.25px;top:329.35px;width:98.25px;height:21.72px;padding-top:1px;padding-left:1.5px;">Percentage</div>
<div class="d c" style="left:522.5px;top:329.35px;width:50px;height:21.72px;padding-top:1px;padding-left:1.5px;">UTB</div>
<div class="d c" style="left:578.25px;top:329.35px;width:74.25px;height:21.72px;padding-top:1px;padding-left:1.5px;">88.0</div>
<div class="d c" style="left:652.5px;top:329.35px;width:65.5px;height:21.72px;padding-top:1px;padding-left:1.5px;">73.9</div>
<svg style="left:728.15px;top:336.31px" width="9.0" height="8.6" viewBox="0 0 9.0 8.6"><path d="M0 8.6 L9.0 8.6 L4.5 0 Z" fill="#55a630"/></svg>
<div class="d c" style="left:746.5px;top:329.35px;width:36.5px;height:21.72px;padding-top:1px;padding-left:1.5px;">119%</div>
<div class="d c" style="left:783px;top:329.35px;width:66.5px;height:21.72px;padding-top:1px;padding-left:1.5px;">86.5</div>
<svg style="left:857.9px;top:336.31px" width="9.0" height="8.6" viewBox="0 0 9.0 8.6"><path d="M0 8.6 L9.0 8.6 L4.5 0 Z" fill="#ee1111"/></svg>
<div class="d c" style="left:874.5px;top:329.35px;width:39.75px;height:21.72px;padding-top:1px;padding-left:1.5px;">102%</div>
<div class="d c" style="left:919.25px;top:329.35px;width:67px;height:21.72px;padding-top:1px;padding-left:1.5px;">986.0</div>
<div class="d c" style="left:986.25px;top:329.35px;width:66.25px;height:21.72px;padding-top:1px;padding-left:1.5px;">1,005.7</div>
<svg style="left:1061.9px;top:336.31px" width="9.0" height="8.6" viewBox="0 0 9.0 8.6"><path d="M0 8.6 L9.0 8.6 L4.5 0 Z" fill="#ee1111"/></svg>
<div class="d c" style="left:1079.5px;top:329.35px;width:47.25px;height:21.72px;padding-top:1px;padding-left:1.5px;">98%</div>
<div class="d c" style="left:1126.75px;top:329.35px;width:65.75px;height:21.72px;padding-top:1px;padding-left:1.5px;">895.1</div>
<svg style="left:1202.78px;top:336.31px" width="9.0" height="8.6" viewBox="0 0 9.0 8.6"><path d="M0 8.6 L9.0 8.6 L4.5 0 Z" fill="#ee1111"/></svg>
<div class="d c" style="left:1221.25px;top:329.35px;width:36.25px;height:21.72px;padding-top:1px;padding-left:1.5px;">110%</div>
<div class="d c" style="left:52px;top:351.07px;width:53.3px;height:21.72px;padding-top:1px;padding-left:1.5px;">7</div>
<div class="d c" style="left:105.3px;top:351.07px;width:127.1px;height:21.72px;padding-top:1px;padding-left:1.5px;">Time</div>
<div class="d c" style="left:232.4px;top:351.07px;width:191.85px;height:21.72px;padding-top:1px;padding-left:1.5px;">Time to Hire</div>
<div class="d c" style="left:424.25px;top:351.07px;width:98.25px;height:21.72px;padding-top:1px;padding-left:1.5px;">Days</div>
<div class="d c" style="left:522.5px;top:351.07px;width:50px;height:21.72px;padding-top:1px;padding-left:1.5px;">LTB</div>
<div class="d c" style="left:578.25px;top:351.07px;width:74.25px;height:21.72px;padding-top:1px;padding-left:1.5px;">4.0</div>
<div class="d c" style="left:652.5px;top:351.07px;width:65.5px;height:21.72px;padding-top:1px;padding-left:1.5px;">4.8</div>
<svg style="left:728.15px;top:358.03px" width="9.0" height="8.6" viewBox="0 0 9.0 8.6"><path d="M0 0 L9.0 0 L4.5 8.6 Z" fill="#6aa84f"/></svg>
<div class="d c" style="left:746.5px;top:351.07px;width:36.5px;height:21.72px;padding-top:1px;padding-left:1.5px;">83%</div>
<div class="d c" style="left:783px;top:351.07px;width:66.5px;height:21.72px;padding-top:1px;padding-left:1.5px;">5.2</div>
<svg style="left:857.9px;top:358.03px" width="9.0" height="8.6" viewBox="0 0 9.0 8.6"><path d="M0 0 L9.0 0 L4.5 8.6 Z" fill="#6aa84f"/></svg>
<div class="d c" style="left:874.5px;top:351.07px;width:39.75px;height:21.72px;padding-top:1px;padding-left:1.5px;">77%</div>
<div class="d c" style="left:919.25px;top:351.07px;width:67px;height:21.72px;padding-top:1px;padding-left:1.5px;">111.0</div>
<div class="d c" style="left:986.25px;top:351.07px;width:66.25px;height:21.72px;padding-top:1px;padding-left:1.5px;">106.6</div>
<svg style="left:1061.9px;top:358.03px" width="9.0" height="8.6" viewBox="0 0 9.0 8.6"><path d="M0 0 L9.0 0 L4.5 8.6 Z" fill="#ee1111"/></svg>
<div class="d c" style="left:1079.5px;top:351.07px;width:47.25px;height:21.72px;padding-top:1px;padding-left:1.5px;">104%</div>
<div class="d c" style="left:1126.75px;top:351.07px;width:65.75px;height:21.72px;padding-top:1px;padding-left:1.5px;">85.2</div>
<svg style="left:1202.78px;top:358.03px" width="9.0" height="8.6" viewBox="0 0 9.0 8.6"><path d="M0 0 L9.0 0 L4.5 8.6 Z" fill="#6aa84f"/></svg>
<div class="d c" style="left:1221.25px;top:351.07px;width:36.25px;height:21.72px;padding-top:1px;padding-left:1.5px;">130%</div>
<div class="d c" style="left:52px;top:372.79px;width:53.3px;height:21.72px;padding-top:1px;padding-left:1.5px;">8</div>
<div class="d c" style="left:105.3px;top:372.79px;width:127.1px;height:21.72px;padding-top:1px;padding-left:1.5px;">Cost</div>
<div class="d c" style="left:232.4px;top:372.79px;width:191.85px;height:21.72px;padding-top:1px;padding-left:1.5px;">Cost per Hire</div>
<div class="d c" style="left:424.25px;top:372.79px;width:98.25px;height:21.72px;padding-top:1px;padding-left:1.5px;">Currency</div>
<div class="d c" style="left:522.5px;top:372.79px;width:50px;height:21.72px;padding-top:1px;padding-left:1.5px;">LTB</div>
<div class="d c" style="left:578.25px;top:372.79px;width:74.25px;height:21.72px;padding-top:1px;padding-left:1.5px;">6,200.0</div>
<div class="d c" style="left:652.5px;top:372.79px;width:65.5px;height:21.72px;padding-top:1px;padding-left:1.5px;">7,378.0</div>
<svg style="left:728.15px;top:379.75px" width="9.0" height="8.6" viewBox="0 0 9.0 8.6"><path d="M0 0 L9.0 0 L4.5 8.6 Z" fill="#6aa84f"/></svg>
<div class="d c" style="left:746.5px;top:372.79px;width:36.5px;height:21.72px;padding-top:1px;padding-left:1.5px;">84%</div>
<div class="d c" style="left:783px;top:372.79px;width:66.5px;height:21.72px;padding-top:1px;padding-left:1.5px;">8,927.4</div>
<svg style="left:857.9px;top:379.75px" width="9.0" height="8.6" viewBox="0 0 9.0 8.6"><path d="M0 0 L9.0 0 L4.5 8.6 Z" fill="#6aa84f"/></svg>
<div class="d c" style="left:874.5px;top:372.79px;width:39.75px;height:21.72px;padding-top:1px;padding-left:1.5px;">69%</div>
<div class="d c" style="left:919.25px;top:372.79px;width:67px;height:21.72px;padding-top:1px;padding-left:1.5px;">67,700.0</div>
<div class="d c" style="left:986.25px;top:372.79px;width:66.25px;height:21.72px;padding-top:1px;padding-left:1.5px;">61,607.0</div>
<svg style="left:1061.9px;top:379.75px" width="9.0" height="8.6" viewBox="0 0 9.0 8.6"><path d="M0 0 L9.0 0 L4.5 8.6 Z" fill="#ee1111"/></svg>
<div class="d c" style="left:1079.5px;top:372.79px;width:47.25px;height:21.72px;padding-top:1px;padding-left:1.5px;">110%</div>
<div class="d c" style="left:1126.75px;top:372.79px;width:65.75px;height:21.72px;padding-top:1px;padding-left:1.5px;">64,687.4</div>
<svg style="left:1202.78px;top:379.75px" width="9.0" height="8.6" viewBox="0 0 9.0 8.6"><path d="M0 0 L9.0 0 L4.5 8.6 Z" fill="#6aa84f"/></svg>
<div class="d c" style="left:1221.25px;top:372.79px;width:36.25px;height:21.72px;padding-top:1px;padding-left:1.5px;">105%</div>
<div class="d c" style="left:52px;top:394.51px;width:53.3px;height:21.72px;padding-top:1px;padding-left:1.5px;">9</div>
<div class="d c" style="left:105.3px;top:394.51px;width:127.1px;height:21.72px;padding-top:1px;padding-left:1.5px;">Source</div>
<div class="d c" style="left:232.4px;top:394.51px;width:191.85px;height:21.72px;padding-top:1px;padding-left:1.5px;">Candidate Source Efficiency</div>
<div class="d c" style="left:424.25px;top:394.51px;width:98.25px;height:21.72px;padding-top:1px;padding-left:1.5px;">Percentage</div>
<div class="d c" style="left:522.5px;top:394.51px;width:50px;height:21.72px;padding-top:1px;padding-left:1.5px;">UTB</div>
<div class="d c" style="left:578.25px;top:394.51px;width:74.25px;height:21.72px;padding-top:1px;padding-left:1.5px;">45.0</div>
<div class="d c" style="left:652.5px;top:394.51px;width:65.5px;height:21.72px;padding-top:1px;padding-left:1.5px;">42.3</div>
<svg style="left:728.15px;top:401.47px" width="9.0" height="8.6" viewBox="0 0 9.0 8.6"><path d="M0 8.6 L9.0 8.6 L4.5 0 Z" fill="#55a630"/></svg>
<div class="d c" style="left:746.5px;top:394.51px;width:36.5px;height:21.72px;padding-top:1px;padding-left:1.5px;">106%</div>
<div class="d c" style="left:783px;top:394.51px;width:66.5px;height:21.72px;padding-top:1px;padding-left:1.5px;">41.9</div>
<svg style="left:857.9px;top:401.47px" width="9.0" height="8.6" viewBox="0 0 9.0 8.6"><path d="M0 8.6 L9.0 8.6 L4.5 0 Z" fill="#ee1111"/></svg>
<div class="d c" style="left:874.5px;top:394.51px;width:39.75px;height:21.72px;padding-top:1px;padding-left:1.5px;">107%</div>
<div class="d c" style="left:919.25px;top:394.51px;width:67px;height:21.72px;padding-top:1px;padding-left:1.5px;">392.0</div>
<div class="d c" style="left:986.25px;top:394.51px;width:66.25px;height:21.72px;padding-top:1px;padding-left:1.5px;">407.7</div>
<svg style="left:1061.9px;top:401.47px" width="9.0" height="8.6" viewBox="0 0 9.0 8.6"><path d="M0 8.6 L9.0 8.6 L4.5 0 Z" fill="#ee1111"/></svg>
<div class="d c" style="left:1079.5px;top:394.51px;width:47.25px;height:21.72px;padding-top:1px;padding-left:1.5px;">96%</div>
<div class="d c" style="left:1126.75px;top:394.51px;width:65.75px;height:21.72px;padding-top:1px;padding-left:1.5px;">354.7</div>
<svg style="left:1202.78px;top:401.47px" width="9.0" height="8.6" viewBox="0 0 9.0 8.6"><path d="M0 8.6 L9.0 8.6 L4.5 0 Z" fill="#ee1111"/></svg>
<div class="d c" style="left:1221.25px;top:394.51px;width:36.25px;height:21.72px;padding-top:1px;padding-left:1.5px;">111%</div>
<div class="d c" style="left:52px;top:416.23px;width:53.3px;height:22.27px;padding-top:1px;padding-left:1.5px;">10</div>
<div class="d c" style="left:105.3px;top:416.23px;width:127.1px;height:22.27px;padding-top:1px;padding-left:1.5px;">Productivity</div>
<div class="d c" style="left:232.4px;top:416.23px;width:191.85px;height:22.27px;padding-top:1px;padding-left:1.5px;">Recruiter Productivity</div>
<div class="d c" style="left:424.25px;top:416.23px;width:98.25px;height:22.27px;padding-top:1px;padding-left:1.5px;">Hires per Recruiter</div>
<div class="d c" style="left:522.5px;top:416.23px;width:50px;height:22.27px;padding-top:1px;padding-left:1.5px;">UTB</div>
<div class="d c" style="left:578.25px;top:416.23px;width:74.25px;height:22.27px;padding-top:1px;padding-left:1.5px;">16.0</div>
<div class="d c" style="left:652.5px;top:416.23px;width:65.5px;height:22.27px;padding-top:1px;padding-left:1.5px;">18.7</div>
<svg style="left:728.15px;top:423.47px" width="9.0" height="8.6" viewBox="0 0 9.0 8.6"><path d="M0 0 L9.0 0 L4.5 8.6 Z" fill="#ee1111"/></svg>
<div class="d c" style="left:746.5px;top:416.23px;width:36.5px;height:22.27px;padding-top:1px;padding-left:1.5px;">86%</div>
<div class="d c" style="left:783px;top:416.23px;width:66.5px;height:22.27px;padding-top:1px;padding-left:1.5px;">16.1</div>
<svg style="left:857.9px;top:423.47px" width="9.0" height="8.6" viewBox="0 0 9.0 8.6"><path d="M0 0 L9.0 0 L4.5 8.6 Z" fill="#ee1111"/></svg>
<div class="d c" style="left:874.5px;top:416.23px;width:39.75px;height:22.27px;padding-top:1px;padding-left:1.5px;">99%</div>
<div class="d c" style="left:919.25px;top:416.23px;width:67px;height:22.27px;padding-top:1px;padding-left:1.5px;">122.0</div>
<div class="d c" style="left:986.25px;top:416.23px;width:66.25px;height:22.27px;padding-top:1px;padding-left:1.5px;">126.9</div>
<svg style="left:1061.9px;top:423.47px" width="9.0" height="8.6" viewBox="0 0 9.0 8.6"><path d="M0 0 L9.0 0 L4.5 8.6 Z" fill="#ee1111"/></svg>
<div class="d c" style="left:1079.5px;top:416.23px;width:47.25px;height:22.27px;padding-top:1px;padding-left:1.5px;">96%</div>
<div class="d c" style="left:1126.75px;top:416.23px;width:65.75px;height:22.27px;padding-top:1px;padding-left:1.5px;">101.5</div>
<svg style="left:1202.78px;top:423.47px" width="9.0" height="8.6" viewBox="0 0 9.0 8.6"><path d="M0 0 L9.0 0 L4.5 8.6 Z" fill="#ee1111"/></svg>
<div class="d c" style="left:1221.25px;top:416.23px;width:36.25px;height:22.27px;padding-top:1px;padding-left:1.5px;">120%</div>
</body>
</html>
